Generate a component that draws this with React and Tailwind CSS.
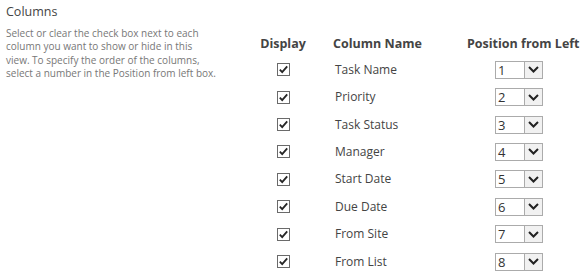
import React from 'react';

// Columns settings block: description on the left, display/order table on the right
const rows = [
  'Task Name',
  'Priority',
  'Task Status',
  'Manager',
  'Start Date',
  'Due Date',
  'From Site',
  'From List',
];

const help = [
  'Select or clear the check box next to each',
  'column you want to show or hide in this',
  'view. To specify the order of the columns,',
  'select a number in the Position from left box.',
];

const CheckBox = () => (
  <svg width="13" height="13" viewBox="0 0 13 13" className="block">
    <rect x="0.5" y="0.5" width="12" height="12" fill="#fff" stroke="#6a6a6a" />
    <path d="M2.8 6.6 L5.2 9.2 L10.2 3.4" fill="none" stroke="#262626" strokeWidth="1.8" />
  </svg>
);

const PositionSelect = ( { value } ) => (
  <div className="ml-[28px] flex h-[18px] w-[48px] border border-[#ababab] bg-white">
    <span className="flex-1 pl-[2px] text-[13px] leading-[16px] text-[#333]">{ value }</span>
    <span className="flex w-[18px] items-center justify-center border-l border-[#ababab] bg-[#f1f1f1]">
      <svg width="11" height="7" viewBox="0 0 11 7">
        <path d="M1 1 L5.5 5.5 L10 1" fill="none" stroke="#222" strokeWidth="2" />
      </svg>
    </span>
  </div>
);

const App = () =>
{
  return (
    <div
      className="flex h-[275px] w-[588px] overflow-hidden bg-white text-[#444]"
      style={ { fontFamily: '"Open Sans", "Noto Sans", sans-serif' } }
    >
      {/* Left - title and help text */ }
      <div className="w-[255px] shrink-0 pl-[6px] pt-[3px]">
        <div className="text-[12.5px] leading-[18px] text-[#444]">Columns</div>
        <div className="mt-[6px] text-[10px] leading-[13.4px] text-[#777]">
          { help.map( ( line ) => (
            <div key={ line } className="whitespace-nowrap">{ line }</div>
          ) ) }
        </div>
      </div>

      {/* Right - columns table */ }
      <div className="pt-[34px]">
        <div className="flex h-[20px] items-center text-[12.5px] font-bold text-[#444]">
          <div className="w-[56px] text-center">Display</div>
          <div className="ml-[22px] w-[134px]">Column Name</div>
          <div className="whitespace-nowrap">Position from Left</div>
        </div>
        <div className="mt-[2px]">
          { rows.map( ( name, i ) => (
            <div key={ name } className="flex h-[27.43px] items-center">
              <div className="flex w-[56px] justify-center pl-[1px]">
                <CheckBox />
              </div>
              <div className="ml-[24px] w-[132px] text-[12px] text-[#444]">{ name }</div>
              <PositionSelect value={ i + 1 } />
            </div>
          ) ) }
        </div>
      </div>
    </div>
  );
};

export default App;
